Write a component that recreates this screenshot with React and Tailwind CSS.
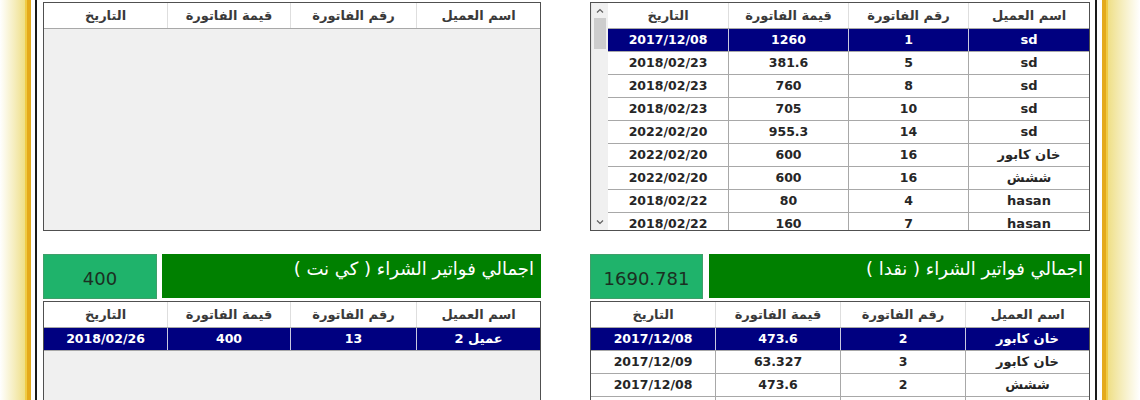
const HEAD = ['اسم العميل', 'رقم الفاتورة', 'قيمة الفاتورة', 'التاريخ'];

const topRows = [
  ['sd', '1', '1260', '2017/12/08'],
  ['sd', '5', '381.6', '2018/02/23'],
  ['sd', '8', '760', '2018/02/23'],
  ['sd', '10', '705', '2018/02/23'],
  ['sd', '14', '955.3', '2022/02/20'],
  ['خان كابور', '16', '600', '2022/02/20'],
  ['ششش', '16', '600', '2022/02/20'],
  ['hasan', '4', '80', '2018/02/22'],
  ['hasan', '7', '160', '2018/02/22'],
];

const cashRows = [
  ['خان كابور', '2', '473.6', '2017/12/08'],
  ['خان كابور', '3', '63.327', '2017/12/09'],
  ['ششش', '2', '473.6', '2017/12/08'],
  ['', '', '', ''],
];

const knetRows = [['عميل 2', '13', '400', '2018/02/26']];

const Scrollbar = () => (
  <div className="w-[17px] shrink-0 bg-[#f0f0f0] flex flex-col items-center border-l border-[#e6e6e6]">
    <div className="h-[15px] w-full flex items-center justify-center shrink-0">
      <svg width="8" height="5" viewBox="0 0 8 5"><path d="M1 4.5 L4 1.5 L7 4.5" fill="none" stroke="#606060" strokeWidth="1.2" /></svg>
    </div>
    <div className="w-[12px] h-[31px] bg-[#cdcdcd] shrink-0" />
    <div className="flex-1" />
    <div className="h-[15px] w-full flex items-center justify-center shrink-0">
      <svg width="8" height="5" viewBox="0 0 8 5"><path d="M1 0.5 L4 3.5 L7 0.5" fill="none" stroke="#606060" strokeWidth="1.2" /></svg>
    </div>
  </div>
);

const Table = ({ widths, rows, scroll, height }) => (
  <div dir="rtl" className={`flex shrink-0 bg-[#f0f0f0] border border-[#505050] overflow-hidden ${height}`}>
    <div className="flex flex-col">
      <div className="flex h-[26px] bg-white border-b border-[#a8a8a8] shrink-0">
        {HEAD.map((h, i) => (
          <div
            key={h}
            className={`${widths[i]} flex items-center justify-center text-[13px] font-bold text-[#3a3a3a] ${i < 3 ? 'border-l border-[#dedede]' : ''}`}
          >
            {h}
          </div>
        ))}
      </div>
      {rows.map((r, ri) => {
        const sel = ri === 0;
        return (
          <div
            key={ri}
            className={`flex h-[23px] shrink-0 border-b border-[#a8a8a8] ${sel ? 'bg-[#000080] text-white' : 'bg-white text-[#262626]'}`}
          >
            {r.map((c, i) => (
              <div
                key={i}
                className={`${widths[i]} flex items-center justify-center font-bold ${i === 0 ? 'text-[13px]' : 'text-[12.5px]'} ${i < 3 ? (sel ? 'border-l border-[#c8c8e0]' : 'border-l border-[#a8a8a8]') : ''}`}
              >
                {c}
              </div>
            ))}
          </div>
        );
      })}
    </div>
    {scroll && <Scrollbar />}
  </div>
);

const Total = ({ label, value, boxW, barW, gap }) => (
  <div className={`flex shrink-0 h-[45px] ${gap}`}>
    <div className={`${boxW} bg-[#1fb36b] border border-[#3f9f6a] flex items-center justify-center pt-[3px] text-[18px] text-[#1b2f22]`}>
      {value}
    </div>
    <div
      dir="rtl"
      className={`${barW} h-[44px] bg-[#008000] text-white text-[18px] px-[7px] pt-[2px] leading-[26px]`}
    >
      {label}
    </div>
  </div>
);

export default function App() {
  return (
    <div
      className="w-[1140px] h-[400px] overflow-hidden bg-white flex"
      style={{ fontFamily: '"DejaVu Sans", "Noto Sans", sans-serif' }}
    >
      {/* left frame */}
      <div className="w-[25px] bg-linear-to-r from-white to-[#efdf86]" />
      <div className="w-[2px] bg-[#f0cb45]" />
      <div className="w-[4px] bg-[#e4aa1c]" />
      <div className="w-[4px] bg-white" />
      <div className="w-[2px] bg-[#1a1a1a]" />

      <div className="w-[1058px] flex gap-[49px] pl-[6px] pt-[2px]">
        <div className="w-[498px] flex flex-col">
          <Table
            height="h-[229px]"
            widths={['w-[124px]', 'w-[126px]', 'w-[123px]', 'w-[123px]']}
            rows={[]}
          />
          <div className="h-[23px] shrink-0" />
          <Total
            label="اجمالي فواتير الشراء ( كي نت )"
            value="400"
            boxW="w-[114px]"
            barW="w-[379px]"
            gap="gap-[5px]"
          />
          <div className="h-[2px] shrink-0" />
          <Table
            height="h-[120px]"
            widths={['w-[124px]', 'w-[126px]', 'w-[123px]', 'w-[123px]']}
            rows={knetRows}
          />
        </div>

        <div className="w-[500px] flex flex-col">
          <Table
            height="h-[229px]"
            scroll
            widths={['w-[121px]', 'w-[120px]', 'w-[120px]', 'w-[120px]']}
            rows={topRows}
          />
          <div className="h-[23px] shrink-0" />
          <Total
            label="اجمالي فواتير الشراء ( نقدا )"
            value="1690.781"
            boxW="w-[113px]"
            barW="w-[381px]"
            gap="gap-[6px]"
          />
          <div className="h-[2px] shrink-0" />
          <Table
            height="h-[120px]"
            widths={['w-[124px]', 'w-[125px]', 'w-[125px]', 'w-[124px]']}
            rows={cashRows}
          />
        </div>
      </div>

      {/* right frame */}
      <div className="w-[2px] bg-[#1a1a1a]" />
      <div className="w-[5px] bg-white" />
      <div className="w-[4px] bg-[#e4aa1c]" />
      <div className="w-[2px] bg-[#f0cb45]" />
      <div className="flex-1 bg-linear-to-l from-white to-[#efdf86]" />
    </div>
  );
}
